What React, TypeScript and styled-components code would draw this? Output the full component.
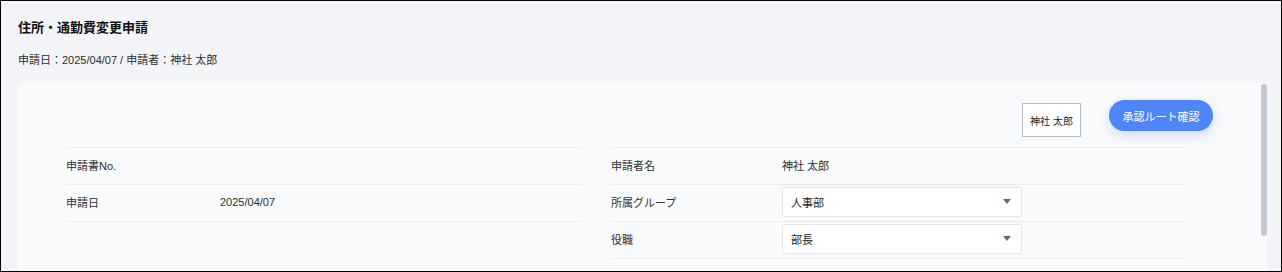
import React from 'react';
import styled, {createGlobalStyle} from 'styled-components';

const GlobalStyle = createGlobalStyle`
  body {
    margin: 0;
    font-family: "Liberation Sans", "Noto Sans CJK JP", sans-serif;
    color: #333;
  }
`;

type Field = {
  label: string;
  value?: string;
  select?: boolean;
};

const leftFields: Field[] = [
  {label: '申請書No.'},
  {label: '申請日', value: '2025/04/07'},
];

const rightFields: Field[] = [
  {label: '申請者名', value: '神社 太郎'},
  {label: '所属グループ', value: '人事部', select: true},
  {label: '役職', value: '部長', select: true},
];

const FieldTable = (props: {fields: Field[]; labelWidth: number}) => {
  const {fields, labelWidth} = props;
  return (
    <Table>
      {fields.map(f => (
        <Row key={f.label}>
          <Label $width={labelWidth}>{f.label}</Label>
          {f.select ? (
            <Select>
              <span>{f.value}</span>
              <Caret />
            </Select>
          ) : (
            <Value>{f.value}</Value>
          )}
        </Row>
      ))}
    </Table>
  );
};

export default function App() {
  return (
    <>
      <GlobalStyle />
      <Frame>
        <Title>住所・通勤費変更申請</Title>
        <Meta>申請日：2025/04/07 / 申請者：神社 太郎</Meta>
        <Card>
          <CardBody>
            <TopBar>
              <NameBox>神社 太郎</NameBox>
              <RouteButton type="button">承認ルート確認</RouteButton>
            </TopBar>
            <Columns>
              <FieldTable fields={leftFields} labelWidth={154} />
              <FieldTable fields={rightFields} labelWidth={171} />
            </Columns>
          </CardBody>
          <ScrollRail>
            <ScrollThumb />
          </ScrollRail>
        </Card>
      </Frame>
    </>
  );
}

const Frame = styled.div`
  box-sizing: border-box;
  height: 272px;
  border: 1px solid #000;
  background: #f3f4f8;
  overflow: hidden;
  padding: 18px 0 0 17px;
`;

const Title = styled.h1`
  margin: 0;
  font-size: 13px;
  line-height: 18px;
  font-weight: 700;
  color: #111;
`;

const Meta = styled.div`
  margin-top: 15px;
  font-size: 11px;
  line-height: 16px;
  color: #2e2e2e;
`;

const Card = styled.div`
  display: flex;
  margin-top: 15px;
  width: 1249px;
  height: 200px;
  background: #f9fafc;
  border-radius: 3px;
`;

const CardBody = styled.div`
  flex: 1;
  padding: 17px 48px 0 48px;
`;

const ScrollRail = styled.div`
  width: 6px;
  flex-shrink: 0;
  padding-top: 1px;
`;

const ScrollThumb = styled.div`
  height: 152px;
  border-radius: 3px;
  background: #c3c6d3;
`;

const TopBar = styled.div`
  display: flex;
  justify-content: flex-end;
  align-items: flex-start;
  gap: 28px;
`;

const NameBox = styled.div`
  box-sizing: border-box;
  margin-top: 3px;
  width: 59px;
  height: 34px;
  display: flex;
  align-items: center;
  justify-content: center;
  background: #fff;
  border: 1px solid #b3bfd6;
  font-size: 10px;
  color: #222;
`;

const RouteButton = styled.button`
  width: 104px;
  height: 31px;
  border: none;
  border-radius: 16px;
  background: #4f86f7;
  color: #fff;
  font-family: inherit;
  font-size: 11px;
  box-shadow: 0 4px 12px rgba(79, 134, 247, 0.28);
  cursor: pointer;
`;

const Columns = styled.div`
  display: grid;
  grid-template-columns: 516px 573px;
  column-gap: 29px;
  margin-top: 10px;
  align-items: start;
`;

const Table = styled.div`
  border-top: 1px solid #e9ebf0;
`;

const Row = styled.div`
  box-sizing: border-box;
  display: flex;
  align-items: center;
  height: 37px;
  padding-bottom: 3px;
  border-bottom: 1px solid #e9ebf0;
  font-size: 11px;
`;

const Label = styled.div<{$width: number}>`
  width: ${p => p.$width}px;
  flex-shrink: 0;
  color: #2e2e2e;
`;

const Value = styled.div`
  color: #2e2e2e;
`;

const Select = styled.div`
  box-sizing: border-box;
  width: 240px;
  height: 30px;
  display: flex;
  align-items: center;
  justify-content: space-between;
  padding: 0 10px 0 8px;
  background: #fff;
  border: 1px solid #e4e5ea;
  border-radius: 2px;
  color: #222;
`;

const Caret = styled.span`
  width: 0;
  height: 0;
  border-left: 4px solid transparent;
  border-right: 4px solid transparent;
  border-top: 5px solid #5d6891;
`;
